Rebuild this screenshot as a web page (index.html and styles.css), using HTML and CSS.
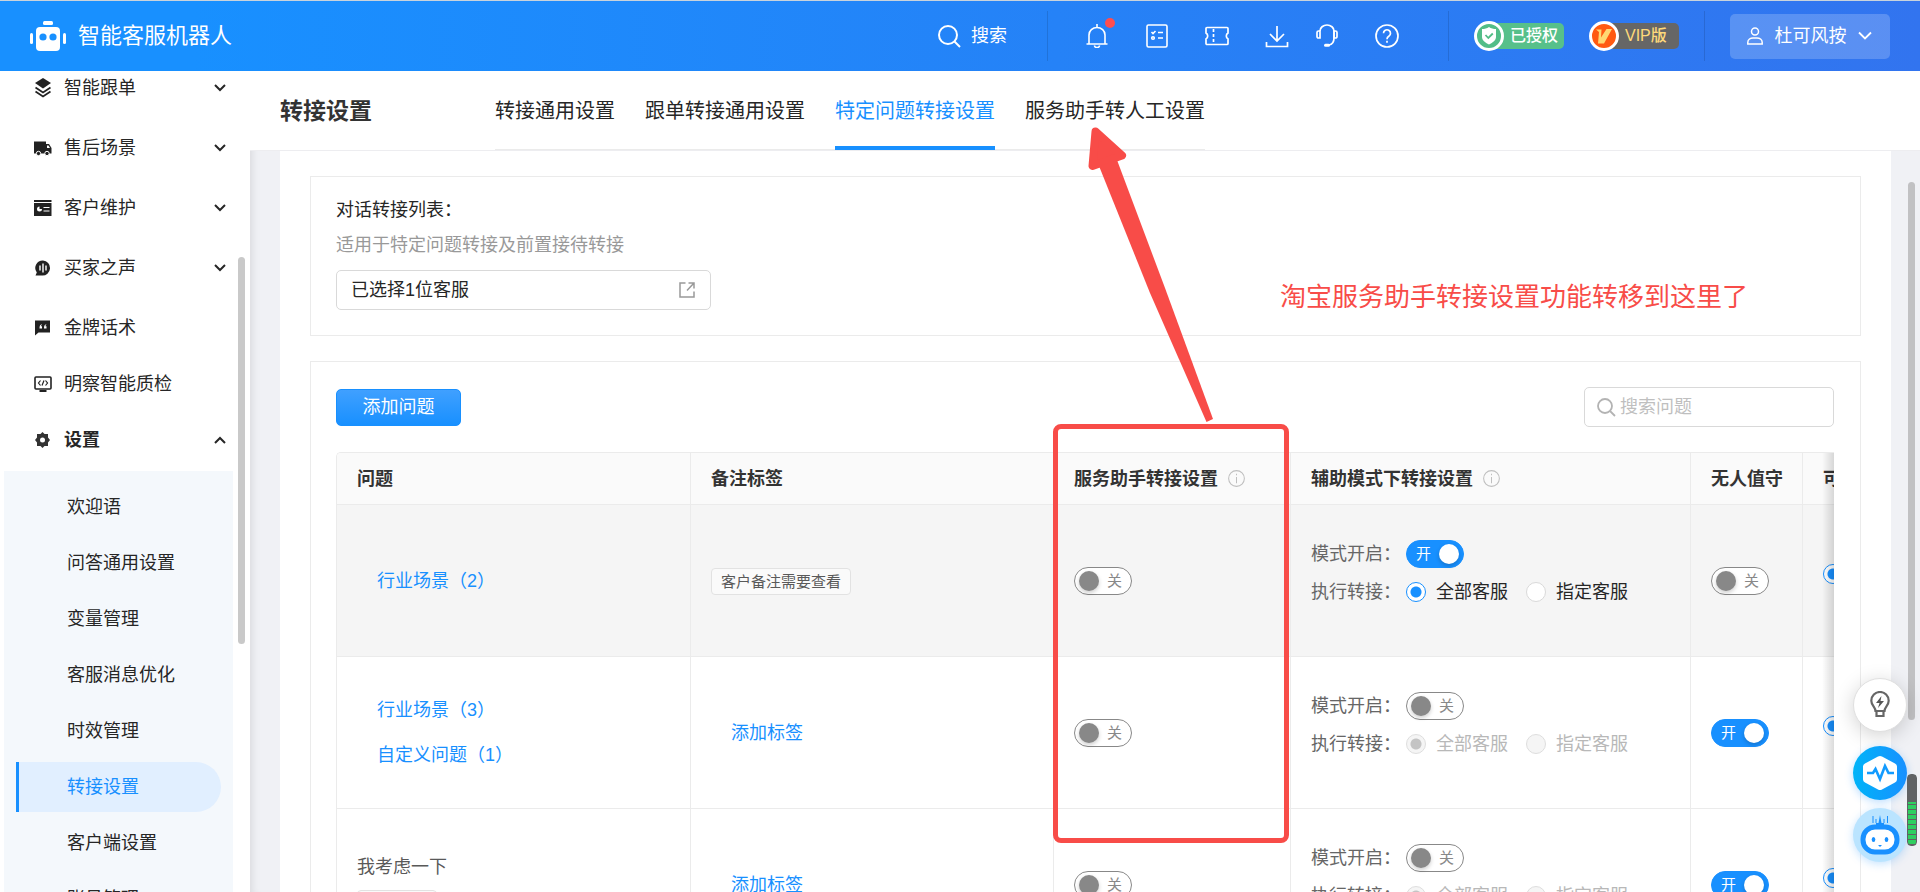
FILE: index.html
```html
<!DOCTYPE html>
<html lang="zh-CN">
<head>
<meta charset="utf-8">
<meta name="viewport" content="width=device-width, initial-scale=1">
<title>转接设置 - 智能客服机器人</title>
<link rel="stylesheet" href="styles.css">
</head>
<body>
<header class="topbar">
  <a class="brand" href="#">
    <svg width="36" height="30" viewBox="0 0 36 30" aria-hidden="true"><g fill="#fff"><rect x="13" y="0" width="10" height="4" rx="1.5"/><rect x="6" y="6" width="24" height="24" rx="4"/><rect x="0" y="12" width="3" height="11" rx="1.5"/><rect x="33" y="12" width="3" height="11" rx="1.5"/></g><circle cx="13" cy="16" r="3.6" fill="#1890ff"/><circle cx="23" cy="16" r="3.6" fill="#1890ff"/></svg>
    <span>智能客服机器人</span>
  </a>
  <div class="topbar-right">
    <button class="top-search" type="button">
      <svg width="24" height="24" viewBox="0 0 24 24" fill="none" stroke="#fff" stroke-width="2" aria-hidden="true"><circle cx="11" cy="11" r="9"/><path d="M17.5 17.5l5.5 5.5"/></svg>
      <span>搜索</span>
    </button>
    <span class="sep"></span>
    <nav class="top-icons" aria-label="快捷入口">
      <button class="icon-btn" type="button" aria-label="通知"><svg width="24" height="24" viewBox="0 0 24 24" fill="none" stroke="#fff" stroke-width="1.6"><path d="M1.5 20h21M4 20v-9a8 7.5 0 0 1 16 0v9M12 0v3M9.500 21.500a2.500 2 0 0 0 5 0"/></svg><span class="dot"></span></button>
      <button class="icon-btn" type="button" aria-label="任务"><svg width="24" height="24" viewBox="0 0 24 24" fill="none" stroke="#fff" stroke-width="1.6"><rect x="2" y="1" width="20" height="22" rx="1.500"/><path d="M6.500 8l1.500 1.500L10.500 7M13 8.500h5M13 14h5"/><circle cx="8" cy="14" r="1.300"/></svg></button>
      <button class="icon-btn" type="button" aria-label="优惠券"><svg width="24" height="24" viewBox="0 0 24 24" fill="none" stroke="#fff" stroke-width="1.700"><path d="M2 3.500h20a1 1 0 0 1 1 1V9a3.500 3.500 0 0 0 0 6v4.500a1 1 0 0 1-1 1H2a1 1 0 0 1-1-1V15a3.500 3.500 0 0 0 0-6V4.500a1 1 0 0 1 1-1z"/><path d="M8.500 5v15" stroke-dasharray="3 2"/></svg></button>
      <button class="icon-btn" type="button" aria-label="下载"><svg width="24" height="24" viewBox="0 0 24 24" fill="none" stroke="#fff" stroke-width="1.700"><path d="M12 2v15M5 10l7 7 7-7M1.500 18v4.500h21V18"/></svg></button>
      <button class="icon-btn near" type="button" aria-label="客服"><svg width="24" height="24" viewBox="0 0 24 24" fill="none" stroke="#fff" stroke-width="1.700"><path d="M5 7a7 6 0 0 1 14 0v7c0 4-2 6.500-5 7"/><path d="M5 7H3.500A1.500 1.500 0 0 0 2 8.500v4A1.500 1.500 0 0 0 3.500 14H5zM19 7h1.500A1.500 1.500 0 0 1 22 8.500v4a1.500 1.500 0 0 1-1.500 1.500H19z"/><path d="M10.500 21.300h3" stroke-width="3" stroke-linecap="round"/></svg></button>
      <button class="icon-btn" type="button" aria-label="帮助"><svg width="24" height="24" viewBox="0 0 24 24" fill="none" stroke="#fff" stroke-width="1.700"><circle cx="12" cy="12" r="11"/><path d="M8.500 9.300a3.500 3.500 0 1 1 5.300 3c-1.300.8-1.800 1.400-1.800 3M12 16.800v2"/></svg></button>
    </nav>
    <span class="sep"></span>
    <div class="badges">
      <span class="badge badge-auth"><span class="medal"><svg width="16" height="18" viewBox="0 0 16 18" aria-hidden="true"><path d="M8 0c2 1.500 4.500 2 7 2v8c0 3-3 5.500-7 7.500C4 15.500 1 13 1 10V2c2.500 0 5-.5 7-2z" fill="#fff"/><path d="M4.500 8l2.800 3 4.500-4.500" fill="none" stroke="#52bd87" stroke-width="1.800"/></svg></span>已授权</span>
      <span class="badge badge-vip"><span class="medal"><svg width="18" height="16" viewBox="0 0 18 16" aria-hidden="true"><path d="M1 1.500h5.500L6 9.500 11.500 1h5.500L9 15.500H3L4 4z" fill="#ffd873"/></svg></span>VIP版</span>
    </div>
    <span class="sep"></span>
    <button class="user" type="button">
      <svg width="16" height="18" viewBox="0 0 16 18" fill="none" stroke="#fff" stroke-width="1.500" aria-hidden="true"><circle cx="8" cy="4.500" r="3.500"/><path d="M.8 17v-1.500c0-3 2.700-4.500 5.200-4.500h4c2.500 0 5.200 1.500 5.200 4.500V17z"/></svg>
      <span>杜可风按</span>
      <svg width="14" height="10" viewBox="0 0 14 10" fill="none" stroke="#fff" stroke-width="1.800" aria-hidden="true"><path d="M1 1.500l6 6 6-6"/></svg>
    </button>
  </div>
</header>

<div class="body">
  <aside class="sidebar">
    <ul class="menu">
      <li class="parent"><a href="#"><svg class="mi" width="18" height="20" viewBox="0 0 18 20"><path d="M9 0l8 5-8 5.500L1 5z" fill="#222"/><path d="M1.500 9.500L9 14.500l7.500-5M1.500 13.500l7.500 5 7.500-5" fill="none" stroke="#222" stroke-width="1.800"/></svg><span>智能跟单</span><svg class="chev" viewBox="0 0 12 8"><path d="M1 1l5 5 5-5"/></svg></a></li>
      <li class="parent"><a href="#"><svg class="mi" width="18" height="20" viewBox="0 0 18 20" fill="#222"><path d="M0 3.500h12v12H0z"/><path d="M12 6h3L17.500 10v5.500H12z"/><path d="M13 7.500h1.500l1.500 2.500h-3z" fill="#fff"/><circle cx="4.500" cy="15.500" r="2.200" stroke="#fff"/><circle cx="13" cy="15.500" r="2.200" stroke="#fff"/></svg><span>售后场景</span><svg class="chev" viewBox="0 0 12 8"><path d="M1 1l5 5 5-5"/></svg></a></li>
      <li class="parent"><a href="#"><svg class="mi" width="18" height="20" viewBox="0 0 18 20"><path d="M0 2h17.500v16H0z" fill="#222"/><path d="M0 4.500h18M9.500 9.500h6M9.500 13h6" stroke="#fff" stroke-width="1.200"/><path d="M3 11a2.500 2.500 0 0 0 5 0H5.500V8.500A2.500 2.500 0 0 0 3 11z" fill="#fff"/></svg><span>客户维护</span><svg class="chev" viewBox="0 0 12 8"><path d="M1 1l5 5 5-5"/></svg></a></li>
      <li class="parent"><a href="#"><svg class="mi" width="18" height="20" viewBox="0 0 18 20"><path d="M9 2.500a7.500 7.500 0 1 1-1 15H1.500l1.300-3A7.500 7.500 0 0 1 9 2.500z" fill="#222"/><path d="M6 7.500v5M9 5.500v9M12 7.500v5" stroke="#fff" stroke-width="1.400"/></svg><span>买家之声</span><svg class="chev" viewBox="0 0 12 8"><path d="M1 1l5 5 5-5"/></svg></a></li>
      <li><a href="#"><svg class="mi" width="18" height="20" viewBox="0 0 18 20"><path d="M1 2.500h15v12H4.500L1 17.500z" fill="#222"/><path d="M8 6c-2 .7-2.500 2-2.500 4.500H8V8.300H6.800M12.500 6c-2 .7-2.500 2-2.500 4.500h2.500V8.300h-1.200" fill="#fff"/></svg><span>金牌话术</span></a></li>
      <li><a href="#"><svg class="mi" width="18" height="20" viewBox="0 0 18 20" fill="none" stroke="#222" stroke-width="1.600"><rect x="1" y="3" width="16" height="12" rx="1"/><path d="M6.500 6.500L4.500 9l2 2.500M11.500 6.500l2 2.500-2 2.500M10 6.500l-2 5" stroke-width="1.200"/><path d="M5.500 17h7" stroke-width="2"/></svg><span>明察智能质检</span></a></li>
      <li><a class="open" href="#"><svg class="mi" width="18" height="20" viewBox="0 0 18 20"><path d="M8.500 2l2 2h3.500v3.500l2 2.500-2 2.500V16h-3.500l-2 2-2-2H3v-3.500L1 10l2-2.500V4h3.500z" fill="#333"/><circle cx="8.500" cy="10" r="2.500" fill="#fff"/></svg><span>设置</span><svg class="chev" viewBox="0 0 12 8"><path d="M1 7l5-5 5 5"/></svg></a>
        <ul class="submenu">
          <li><a href="#">欢迎语</a></li>
          <li><a href="#">问答通用设置</a></li>
          <li><a href="#">变量管理</a></li>
          <li><a href="#">客服消息优化</a></li>
          <li><a href="#">时效管理</a></li>
          <li><a class="active" href="#" aria-current="page">转接设置</a></li>
          <li><a href="#">客户端设置</a></li>
          <li><a href="#">账号管理</a></li>
        </ul>
      </li>
    </ul>
    <span class="thumb side-thumb"></span>
  </aside>

  <main class="main">
    <div class="page-head">
      <h1>转接设置</h1>
      <nav class="tabs">
        <a href="#">转接通用设置</a>
        <a href="#">跟单转接通用设置</a>
        <a class="active" href="#" aria-current="page">特定问题转接设置</a>
        <a href="#">服务助手转人工设置</a>
      </nav>
    </div>
    <div class="sheet">
      <section class="panel">
        <label class="field-name" for="agents">对话转接列表：</label>
        <p class="hint">适用于特定问题转接及前置接待转接</p>
        <div class="picker">
          <input id="agents" type="text" value="已选择1位客服" readonly>
          <svg width="16" height="16" viewBox="0 0 16 16" fill="none" stroke="#999" stroke-width="1.500" aria-hidden="true"><path d="M6.500 1H1v14h14V9.500M9.500 1H15v5.500M15 1L8 8.500"/></svg>
        </div>
      </section>

      <section class="panel">
        <div class="tools">
          <button class="primary" type="button">添加问题</button>
          <label class="search">
            <svg width="20" height="20" viewBox="0 0 20 20" fill="none" stroke="#b3b3b3" stroke-width="1.800" aria-hidden="true"><circle cx="9" cy="9" r="7"/><path d="M14 14l5 5"/></svg>
            <input type="search" placeholder="搜索问题" aria-label="搜索问题">
          </label>
        </div>
        <div class="table-wrap">
          <table>
            <colgroup><col class="c-q"><col class="c-tag"><col class="c-svc"><col class="c-mode"><col class="c-idle"><col class="c-more"></colgroup>
            <thead>
              <tr>
                <th>问题</th>
                <th>备注标签</th>
                <th><span class="th-tip">服务助手转接设置<svg class="info" viewBox="0 0 16 16"><circle cx="8" cy="8" r="7.400"/><path d="M8 6.500v6M8 3.500v1.500"/></svg></span></th>
                <th><span class="th-tip">辅助模式下转接设置<svg class="info" viewBox="0 0 16 16"><circle cx="8" cy="8" r="7.400"/><path d="M8 6.500v6M8 3.500v1.500"/></svg></span></th>
                <th>无人值守</th>
                <th>可转接</th>
              </tr>
            </thead>
            <tbody>
              <tr class="hover">
                <td><a class="link" href="#">行业场景（2）</a></td>
                <td><span class="tag">客户备注需要查看</span></td>
                <td><label class="switch"><input type="checkbox" role="switch"><span class="track">关</span></label></td>
                <td>
                  <div class="mode">
                    <div class="mode-line"><span class="mode-name">模式开启：</span><label class="switch"><input type="checkbox" role="switch" checked><span class="track">开</span></label></div>
                    <div class="mode-line"><span class="mode-name">执行转接：</span><label class="radio"><input type="radio" name="m1" checked>全部客服</label><label class="radio"><input type="radio" name="m1">指定客服</label></div>
                  </div>
                </td>
                <td><label class="switch"><input type="checkbox" role="switch"><span class="track">关</span></label></td>
                <td class="more"><span class="radio"><input type="radio" name="r1" aria-label="可转接" checked></span></td>
              </tr>
              <tr>
                <td><a class="link" href="#">行业场景（3）</a><a class="link" href="#">自定义问题（1）</a></td>
                <td><a class="link" href="#">添加标签</a></td>
                <td><label class="switch"><input type="checkbox" role="switch"><span class="track">关</span></label></td>
                <td>
                  <div class="mode">
                    <div class="mode-line"><span class="mode-name">模式开启：</span><label class="switch"><input type="checkbox" role="switch"><span class="track">关</span></label></div>
                    <div class="mode-line"><span class="mode-name">执行转接：</span><label class="radio"><input type="radio" name="m2" checked disabled>全部客服</label><label class="radio"><input type="radio" name="m2" disabled>指定客服</label></div>
                  </div>
                </td>
                <td><label class="switch"><input type="checkbox" role="switch" checked><span class="track">开</span></label></td>
                <td class="more"><span class="radio"><input type="radio" name="r2" aria-label="可转接" checked></span></td>
              </tr>
              <tr>
                <td><div class="ask"><span>我考虑一下</span><span class="tag">相似问法</span></div></td>
                <td><a class="link" href="#">添加标签</a></td>
                <td><label class="switch"><input type="checkbox" role="switch"><span class="track">关</span></label></td>
                <td>
                  <div class="mode">
                    <div class="mode-line"><span class="mode-name">模式开启：</span><label class="switch"><input type="checkbox" role="switch"><span class="track">关</span></label></div>
                    <div class="mode-line"><span class="mode-name">执行转接：</span><label class="radio"><input type="radio" name="m3" checked disabled>全部客服</label><label class="radio"><input type="radio" name="m3" disabled>指定客服</label></div>
                  </div>
                </td>
                <td><label class="switch"><input type="checkbox" role="switch" checked><span class="track">开</span></label></td>
                <td class="more"><span class="radio"><input type="radio" name="r3" aria-label="可转接" checked></span></td>
              </tr>
            </tbody>
          </table>
        </div>
      </section>
    </div>
    <span class="thumb main-thumb"></span>
  </main>
</div>

<div class="floaters">
  <button class="float tips" type="button" aria-label="提示"><svg width="20" height="28" viewBox="0 0 20 28" fill="none" stroke="#666" stroke-width="2.200"><path d="M5.500 20c0-4-4.200-5.500-4.200-10.300a8.700 8.700 0 0 1 17.400 0C18.700 14.500 14.500 16 14.500 20zM6.500 20v5h7v-5"/><path d="M11.500 5L6 12h3.500l-1.500 5 6-7h-3.500z" fill="#555" stroke="none"/></svg></button>
  <button class="float pulse" type="button" aria-label="监控"><svg width="36" height="36" viewBox="0 0 36 36"><path d="M16 1.500q2-1 4 0L33 8.500q2 1 2 3v13q0 2-2 3l-13 7q-2 1-4 0l-13-7q-2-1-2-3v-13q0-2 2-3z" fill="#fff"/><path d="M5 18h6l2.500-4 4.500 10 5-13 3.500 7H32" fill="none" stroke="#129bff" stroke-width="2.600"/></svg></button>
  <button class="float bot" type="button" aria-label="机器人"><svg width="40" height="40" viewBox="0 0 40 40"><path d="M20 0l1.500 8H24v4h-8V8h2.500z" fill="#1890ff"/><path d="M13 1v7M16 4v4M24 4v4M27.500 1v7" stroke="#1890ff"/><rect x="3" y="12" width="34" height="25" rx="12" fill="#fff" stroke="#1890ff" stroke-width="5"/><ellipse cx="13.500" cy="24.500" rx="1.800" ry="2.600" fill="#1890ff"/><ellipse cx="26.500" cy="24.500" rx="1.800" ry="2.600" fill="#1890ff"/><path d="M18 30h4l-2 2z" fill="#1890ff"/></svg></button>
</div>
<span class="meter"></span>

<div class="marker-box"></div>
<svg class="marker-arrow" width="130" height="302" viewBox="0 0 130 302" aria-hidden="true"><path d="M10.500 8.500L37 32.500L7.500 43z" fill="#f84c48" stroke="#f84c48" stroke-width="8" stroke-linejoin="round"/><path d="M14 43L32 37L80 165L128 296L121.500 299L65 170z" fill="#f84c48"/></svg>
<p class="marker-note">淘宝服务助手转接设置功能转移到这里了</p>
</body>
</html>
```
FILE: styles.css
```css
* { box-sizing: border-box; }
body {
  margin: 0;
  height: 100vh;
  display: flex;
  flex-direction: column;
  overflow: hidden;
  position: relative;
  font-family: "Liberation Sans", "Noto Sans CJK SC", sans-serif;
  font-size: 18px;
  line-height: 28px;
  color: #262626;
  background: #f0f1f5;
}
a { color: inherit; text-decoration: none; }
ul { list-style: none; margin: 0; padding: 0; }
button, input { font: inherit; color: inherit; }
button { border: 0; padding: 0; background: none; cursor: pointer; }
svg { flex: none; }

.topbar {
  flex: none;
  height: 71px;
  display: flex;
  align-items: center;
  justify-content: space-between;
  padding: 0 30px;
  border-top: 1px solid #c9d3dc;
  color: #fff;
  background: linear-gradient(90deg, #1890ff 10%, #3274ef);
}
.brand { display: flex; align-items: center; gap: 12px; font-size: 22px; }
.topbar-right { display: flex; align-items: center; gap: 25px; }
.top-search { display: flex; align-items: center; gap: 10px; padding-right: 15px; }
.sep { width: 1px; height: 50px; background: rgba(0, 0, 0, .12); }
.top-icons { display: flex; gap: 36px; padding: 0 24px 0 12px; }
.icon-btn { position: relative; width: 24px; height: 24px; }
.icon-btn svg { display: block; }
.icon-btn.near { margin-left: -10px; }
.dot { position: absolute; top: -6px; right: -6px; width: 10px; height: 10px; border-radius: 50%; background: #ff4d4f; }
.badges { display: flex; gap: 25px; }
.badge {
  display: flex;
  align-items: center;
  width: 90px;
  height: 26px;
  gap: 6px;
  border-radius: 5px;
  font-size: 16px;
  font-weight: 500;
  white-space: nowrap;
}
.badge-auth { background: linear-gradient(90deg, transparent 15px, #57c08a 15px); }
.badge-vip { color: #ffd97a; background: linear-gradient(90deg, transparent 15px, #666 15px); }
.medal {
  flex: none;
  width: 30px;
  height: 30px;
  display: grid;
  place-items: center;
  border: 3px solid #fff;
  border-radius: 50%;
}
.badge-auth .medal { background: #52bd87; }
.badge-vip .medal { background: #ff5a12; }
.user {
  display: flex;
  align-items: center;
  justify-content: space-between;
  width: 160px;
  height: 45px;
  padding: 0 18px 0 17px;
  border-radius: 5px;
  background: rgba(255, 255, 255, .2);
}

.body { flex: 1; min-height: 0; display: flex; }

.sidebar {
  position: relative;
  z-index: 1;
  flex: none;
  width: 250px;
  overflow: hidden;
  background: #fff;
}
.menu { margin-top: -11px; }
.menu a { display: flex; align-items: center; height: 56px; padding: 0 24px 0 34px; }
.menu .parent { margin-bottom: 4px; }
.mi { margin-right: 12px; }
.chev { width: 12px; height: 8px; margin-left: auto; fill: none; stroke: #262626; stroke-width: 2; }
.menu .open { font-weight: 700; }
.submenu { margin: 3px 17px 0 4px; padding: 8px 12px; background: #f4f8fc; }
.submenu li { height: 56px; padding: 3px 0; }
.submenu a { height: 50px; padding: 0 0 0 48px; border-left: 3px solid transparent; border-radius: 0 25px 25px 0; }
.submenu .active { color: #1890ff; border-left-color: #1890ff; background: #e1efff; }
.thumb { position: absolute; width: 7px; border-radius: 4px; background: #c9c9c9; }
.side-thumb { top: 186px; right: 5px; height: 387px; }

.main {
  position: relative;
  flex: 1;
  min-width: 0;
  display: flex;
  flex-direction: column;
  box-shadow: inset 8px 0 8px -6px rgba(0, 0, 0, .1);
}
.page-head {
  flex: none;
  height: 80px;
  display: flex;
  align-items: center;
  gap: 123px;
  padding-left: 30px;
  border-bottom: 1px solid #ededf0;
  background: #fff;
}
.page-head h1 { margin: 0; font-size: 23px; font-weight: 700; color: #333; }
.tabs { align-self: stretch; display: flex; gap: 30px; font-size: 20px; border-bottom: 1px solid #ebebeb; }
.tabs a { display: flex; align-items: center; border-bottom: 4px solid transparent; padding-top: 4px; margin-bottom: -1px; }
.tabs .active { color: #1890ff; border-bottom-color: #1890ff; }

.sheet {
  flex: 1;
  min-height: 0;
  overflow: hidden;
  margin: 0 29px 0 30px;
  padding: 25px 30px;
  background: #fff;
}
.panel { margin-bottom: 25px; padding: 25px 26px 25px 25px; border: 1px solid #ebebeb; }
.panel:first-child { height: 160px; padding-top: 19px; }
.field-name { display: block; }
.hint { margin: 7px 0 11px; color: #999; }
.picker {
  display: flex;
  align-items: center;
  width: 375px;
  height: 40px;
  padding: 0 15px 0 14px;
  border: 1px solid #d9d9d9;
  border-radius: 5px;
}
.picker input { flex: 1; min-width: 0; border: 0; padding: 0; outline: 0; background: none; }
.tools { display: flex; align-items: center; justify-content: space-between; }
.primary {
  width: 125px;
  height: 37px;
  border: 1px solid #1890ff;
  border-radius: 5px;
  color: #fff;
  background: linear-gradient(#40a0ff, #1890ff);
}
.search {
  display: flex;
  align-items: center;
  gap: 4px;
  width: 250px;
  height: 40px;
  padding: 0 11px;
  border: 1px solid #d9d9d9;
  border-radius: 5px;
}
.search input { flex: 1; min-width: 0; border: 0; padding: 0; outline: 0; background: none; }
.search input::placeholder { color: #bfbfbf; }

.table-wrap {
  position: relative;
  margin-top: 25px;
  overflow: hidden;
  border: 1px solid #ebebeb;
  border-right: 0;
  border-radius: 5px 0 0 0;
}
.table-wrap::after {
  content: "";
  position: absolute;
  top: 0;
  bottom: 0;
  right: 0;
  width: 12px;
  background: linear-gradient(90deg, transparent, rgba(0, 0, 0, .14));
}
table { width: calc(100% + 120px); table-layout: fixed; border-collapse: separate; border-spacing: 0; }
.c-q { width: 354px; }
.c-svc { width: 237px; }
.c-mode { width: 400px; }
.c-idle { width: 112px; }
.c-more { width: 151px; }
th, td { padding: 0 20px; text-align: left; border-right: 1px solid #ebebeb; border-bottom: 1px solid #ebebeb; white-space: nowrap; }
th { height: 52px; font-weight: 700; color: #333; background: #fafafa; }
td { height: 152px; color: #595959; background: #fff; }
tr.hover td { background: #f5f5f5; }
.th-tip { display: flex; align-items: center; gap: 10px; }
.info { width: 17px; height: 17px; fill: none; stroke: #bfbfbf; stroke-width: 1; }
.link { display: block; width: fit-content; margin-left: 20px; color: #1890ff; }
.link + .link { margin-top: 17px; }
.tag {
  display: inline-block;
  height: 27px;
  padding: 0 9px;
  border: 1px solid #e2e2e2;
  border-radius: 4px;
  font-size: 15px;
  line-height: 25px;
  background: #fafafa;
}
.ask { display: flex; flex-direction: column; align-items: flex-start; gap: 9px; }

.switch { position: relative; display: block; width: 58px; height: 28px; cursor: pointer; }
.switch input { position: absolute; inset: 0; margin: 0; opacity: 0; }
.track {
  display: block;
  height: 28px;
  padding-left: 32px;
  border: 1px solid #888;
  border-radius: 14px;
  font-size: 15px;
  line-height: 26px;
  color: #888;
  background: #fff;
}
.track::after {
  content: "";
  position: absolute;
  top: 4px;
  left: 5px;
  width: 20px;
  height: 20px;
  border-radius: 50%;
  background: #888;
  box-shadow: 0 2px 4px rgba(0, 0, 0, .2);
}
.switch input:checked + .track { padding-left: 9px; border-color: #1890ff; color: #fff; background: #1890ff; }
.switch input:checked + .track::after { left: 33px; background: #fff; }

.mode { padding-bottom: 16px; }
.mode-line { display: flex; align-items: center; height: 38px; }
.mode-name { width: 95px; color: #666; }
.radio { display: flex; align-items: center; gap: 10px; margin-right: 18px; color: #262626; }
.radio input {
  appearance: none;
  flex: none;
  width: 20px;
  height: 20px;
  margin: 0;
  border: 1px solid #d9d9d9;
  border-radius: 50%;
  background: #fff;
}
.radio input:checked { border-color: #1890ff; background: radial-gradient(circle, #1890ff 5px, #fff 6px); }
.radio input:disabled { border-color: #dedede; background: #f5f5f5; }
.radio input:checked:disabled { background: radial-gradient(circle, #c4c4c4 5px, #f5f5f5 6px); }
.radio:has(:disabled) { color: #b8b8b8; }
td.more { padding-bottom: 13px; }
.main-thumb { top: 111px; right: 5px; height: 538px; background: #c1c1c3; }

.floaters { position: absolute; right: 13px; bottom: 30px; display: flex; flex-direction: column; gap: 8px; }
.float { width: 54px; height: 54px; display: grid; place-items: center; border-radius: 50%; }
.tips { border: 1px solid #e0e0e0; margin-bottom: 6px; background: #fff; box-shadow: 0 4px 20px rgba(0, 0, 0, .18); }
.pulse { background: linear-gradient(90deg, #00b4f8, #1890ff); box-shadow: 0 2px 8px rgba(24, 144, 255, .3); }
.bot { background: #bae4ff; box-shadow: 0 2px 8px rgba(24, 144, 255, .25); }
.meter {
  position: absolute;
  right: 3px;
  bottom: 46px;
  width: 10px;
  height: 72px;
  border: 1px solid #606264;
  border-radius: 4px;
  background:
    linear-gradient(#606264 27px, transparent 27px),
    repeating-linear-gradient(#2fcf60 0 4px, #606264 4px 5px);
}

.marker-box {
  position: absolute;
  left: 1053px;
  top: 424px;
  width: 236px;
  height: 419px;
  border: 5px solid #f84c48;
  border-radius: 8px;
  pointer-events: none;
}
.marker-arrow { position: absolute; left: 1085px; top: 123px; pointer-events: none; }
.marker-note { position: absolute; left: 1280px; top: 277px; margin: 0; font-size: 26px; line-height: 40px; color: #f84c48; white-space: nowrap; }
```
